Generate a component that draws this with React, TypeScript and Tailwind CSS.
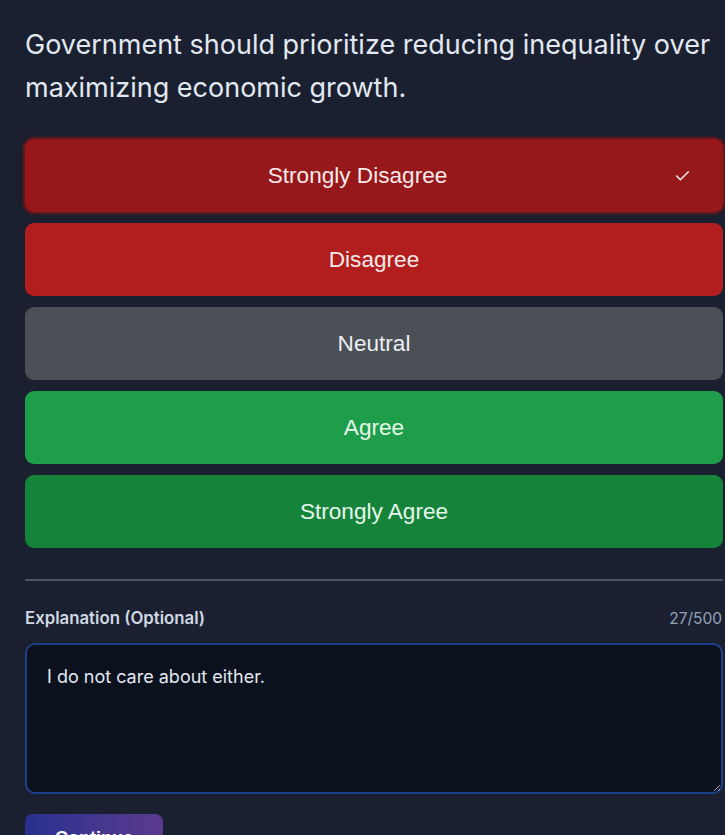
import React from "react";

const options = [
  { label: "Strongly Disagree", cls: "bg-[#96181a] text-[#f7eaea] ring-2 ring-[#7f1518]/60 shadow-[0_0_6px_rgba(120,20,20,0.6)]", selected: true },
  { label: "Disagree", cls: "bg-[#b21e1e] text-[#f7eaea]", selected: false },
  { label: "Neutral", cls: "bg-[#4b5057] text-[#eceef2]", selected: false },
  { label: "Agree", cls: "bg-[#1e9e4a] text-[#e6f7ea]", selected: false },
  { label: "Strongly Agree", cls: "bg-[#15833a] text-[#e6f7ea]", selected: false },
];

export default function App() {
  return (
    <div className="min-h-[835px] w-full bg-[#1a2030] pl-[25px] pr-[2px] pt-[23px] overflow-hidden">
      <h1
        className="text-[27px] leading-[43px] text-[#e2e8f0] font-normal mb-[30px]"
        style={{ fontFamily: "Inter, 'Noto Sans', sans-serif" }}
      >
        Government should prioritize reducing inequality over maximizing economic growth.
      </h1>
      <div className="flex flex-col gap-[11px]">
        {options.map((o) => (
          <button
            key={o.label}
            className={`h-[73px] w-full rounded-[9px] flex items-center pl-8 pr-8 text-[22.6px] ${o.cls}`}
            style={{ fontFamily: "'Liberation Sans', Arial, sans-serif" }}
          >
            <span className="flex-1 text-center">{o.label}</span>
            {o.selected && (
              <svg className="ml-4 w-[17px] h-[17px]" viewBox="0 0 16 16" fill="none" stroke="currentColor" strokeWidth="1.5" strokeLinecap="round" strokeLinejoin="round">
                <path d="M2.5 8.5 L6 12 L13.5 4.5" />
              </svg>
            )}
          </button>
        ))}
      </div>
      <div className="mt-[31px] h-[2px] bg-[#4b5568]" />
      <div
        className="flex items-center justify-between mt-[25px] mb-[12px]"
        style={{ fontFamily: "Inter, 'Noto Sans', sans-serif" }}
      >
        <label className="text-[16.8px] font-semibold text-[#d1d8e2]">Explanation (Optional)</label>
        <span className="text-[15.5px] text-[#94a3b8] mr-[1px]">27/500</span>
      </div>
      <textarea
        className="block w-full h-[151px] rounded-[10px] border-2 border-[#1e3f8a] bg-[#0c111e] px-[20px] pt-[20px] pb-[19px] text-[18px] leading-[24px] text-[#e2e8f0] outline-none resize-y"
        style={{ fontFamily: "Inter, 'Noto Sans', sans-serif" }}
        defaultValue="I do not care about either."
      />
      <button
        className="mt-[20px] w-[138px] h-[48px] rounded-[8px] bg-gradient-to-r from-[#283090] to-[#5a3a8e] text-white font-bold text-[18px]"
        style={{ fontFamily: "'Liberation Sans', Arial, sans-serif" }}
      >
        Continue
      </button>
    </div>
  );
}
